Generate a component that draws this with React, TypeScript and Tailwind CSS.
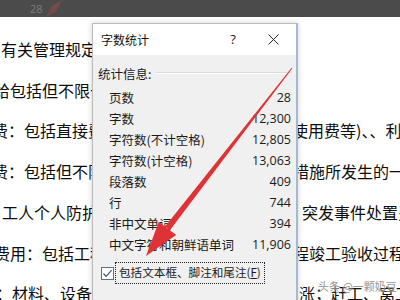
import React from "react";

const leftLines = [
  { t: "有关管理规定", ml: "ml-[1px]" },
  { t: "给包括但不限于", ml: "ml-[-6px]" },
  { t: "费：包括直接费", ml: "ml-[-8px]" },
  { t: "费：包括但不限于", ml: "ml-[-8px]" },
  { t: "工人个人防护", ml: "ml-[2px]" },
  { t: "费用：包括工程", ml: "ml-[-6px]" },
  { t: "：材料、设备", ml: "ml-[-4px]" },
];

const rightLines = [
  { t: "\u00a0", ml: "ml-0" },
  { t: "\u00a0", ml: "ml-0" },
  { t: "使用费等)、、利", ml: "ml-[2px]" },
  { t: "措施所发生的一", ml: "ml-[3px]" },
  { t: "突发事件处置费", ml: "ml-[12px]" },
  { t: "程竣工验收过程", ml: "ml-[3px]" },
  { t: "涨；赶工、窝工", ml: "ml-[9px]" },
];

const rows: [string, string][] = [
  ["页数", "28"],
  ["字数", "12,300"],
  ["字符数(不计空格)", "12,805"],
  ["字符数(计空格)", "13,063"],
  ["段落数", "409"],
  ["行", "744"],
  ["非中文单词", "394"],
  ["中文字符和朝鲜语单词", "11,906"],
];

export default function App() {
  return (
    <div className="relative w-[400px] h-[300px] overflow-hidden bg-white font-['Noto_Sans_CJK_SC',sans-serif]">
      {/* top dark strip */}
      <div className="relative h-[17px] bg-[#4b4b4b] flex items-center">
        <span className="ml-[30px] text-[11px] text-[#7c7c7c] font-['Open_Sans',sans-serif] leading-none">28</span>
        <svg className="absolute left-[40px] top-0" width="24" height="17" viewBox="0 0 24 17">
          <polygon points="6,17 12,6 22,0 16,12" fill="#a84a4a" opacity="0.45" />
        </svg>
      </div>

      {/* document text */}
      <div className="flex pt-[12px] text-[16px] leading-[40.7px] text-[#0d0d0d]">
        <div className="w-[92px] overflow-hidden shrink-0">
          {leftLines.map((l, i) => (
            <div key={i} className={`whitespace-nowrap ${l.ml}`}>{l.t}</div>
          ))}
        </div>
        <div className="w-[198px] shrink-0" />
        <div className="flex-1 overflow-hidden">
          {rightLines.map((l, i) => (
            <div key={i} className={`whitespace-nowrap ${l.ml}`}>{l.t}</div>
          ))}
        </div>
      </div>

      {/* watermark */}
      <div className="absolute left-[318px] top-[279px] text-[11px] leading-[14px] text-[#8a8a8a] opacity-90 [text-shadow:0_0_2px_#fff]">
        头条 @一颗奶豆
      </div>

      {/* dialog */}
      <div className="absolute left-[92px] top-[23px] w-[206px] h-[290px] bg-[#f0f0f0] border border-[#bcbcbc] border-r-2 border-r-[#a3bad1] shadow-[0_0_6px_rgba(0,0,0,0.18)] flex flex-col">
        <div className="h-[31px] bg-white flex items-center pl-[8px] text-[12px] text-[#111]">
          <span className="flex-1">字数统计</span>
          <span className="w-[20px] text-center text-[13px] font-['Open_Sans',sans-serif] text-[#222] mr-[25px]">?</span>
          <svg className="mr-[17px]" width="11" height="11" viewBox="0 0 11 11">
            <path d="M0.5 0.5 L10.5 10.5 M10.5 0.5 L0.5 10.5" stroke="#222" strokeWidth="1" />
          </svg>
        </div>
        <div className="flex-1 pt-[11px] pl-[5px] pr-[5px] text-[12.5px] text-[#1a1a1a]">
          <div className="flex items-center h-[16px]">
            <span className="leading-[16px]">统计信息:</span>
            <div className="flex-1 ml-[5px] mt-[-2px] border-t border-[#d9d9d9] border-b border-b-white" />
          </div>
          <div className="mt-[6px]">
            {rows.map(([k, v]) => (
              <div key={k} className="flex items-center h-[21px] pl-[11px]">
                <span className="flex-1 whitespace-nowrap">{k}</span>
                <span className="font-['Open_Sans',sans-serif] text-[12.5px]">{v}</span>
              </div>
            ))}
          </div>
          <div className="mt-[6px] flex items-center">
            <div className="w-[13px] h-[13px] border border-[#5f6f80] bg-white ml-[3px] flex items-center justify-center">
              <svg width="11" height="11" viewBox="0 0 11 11">
                <path d="M1.5 5.5 L4.2 8.3 L9.6 2.2" stroke="#3e5670" strokeWidth="1.2" fill="none" />
              </svg>
            </div>
            <div className="ml-[1px] h-[22px] px-[3px] border border-dotted border-[#222] flex items-center whitespace-nowrap text-[11.6px]">
              包括文本框、脚注和尾注(<span className="underline">F</span>)
            </div>
          </div>
        </div>
      </div>

      {/* red arrow */}
      <svg className="absolute left-0 top-0 pointer-events-none" width="400" height="300" viewBox="0 0 400 300">
        <polygon points="291.6,67.7 292.4,68.3 169.9,230.2 165.1,226.6" fill="#de3236" />
        <polygon points="146,256 176.2,235.1 158.8,221.7" fill="#de3236" />
      </svg>
    </div>
  );
}
